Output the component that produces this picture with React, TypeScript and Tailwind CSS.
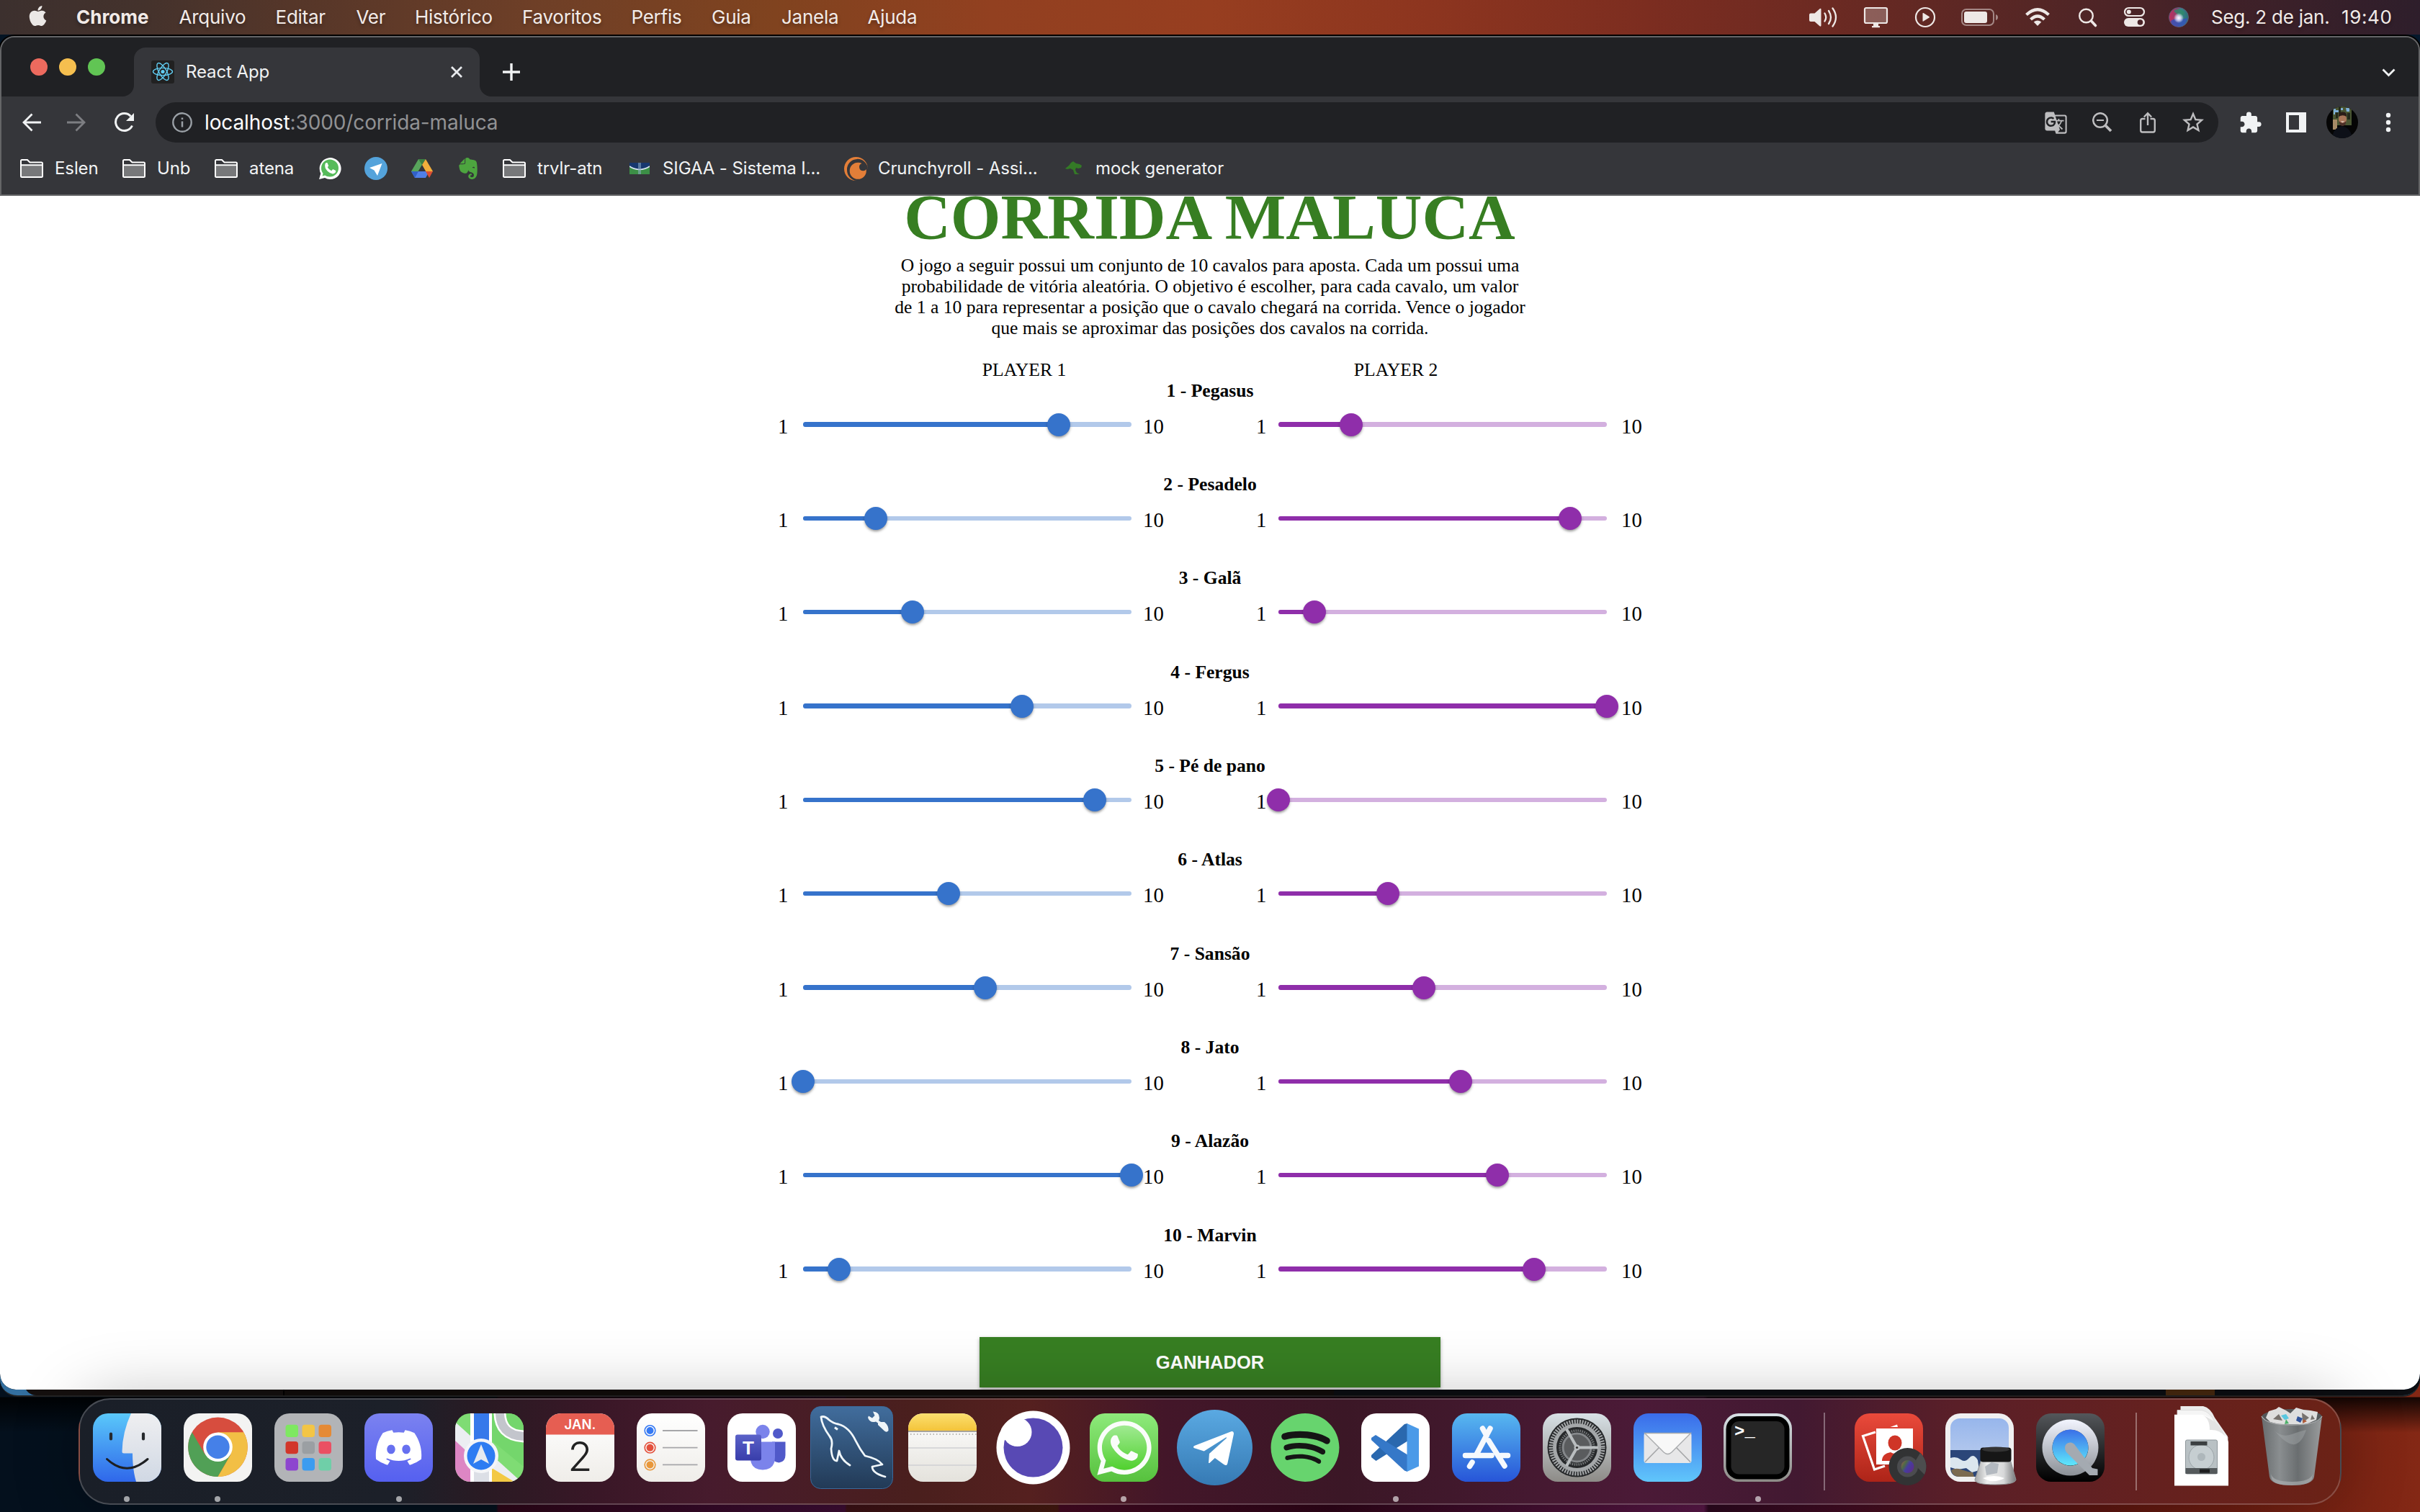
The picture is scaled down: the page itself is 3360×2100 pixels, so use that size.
import React from "react";
import { FaApple, FaDiscord, FaWhatsapp, FaTelegramPlane, FaSpotify, FaEvernote } from "react-icons/fa";
import { MdExtension, MdStarOutline, MdGTranslate } from "react-icons/md";
import { SiCrunchyroll } from "react-icons/si";

const MENU = [
  { label: "Chrome", box: "w-[142.5px] font-bold tracking-[0px]" },
  { label: "Arquivo", box: "w-[134px] tracking-[-0.25px]" },
  { label: "Editar", box: "w-[112px] tracking-[-0.25px]" },
  { label: "Ver", box: "w-[81.500px] tracking-[-0.25px]" },
  { label: "Histórico", box: "w-[149px] tracking-[-0.25px]" },
  { label: "Favoritos", box: "w-[151.5px] tracking-[-0.25px]" },
  { label: "Perfis", box: "w-[111.5px] tracking-[-0.25px]" },
  { label: "Guia", box: "w-[97px] tracking-[-0.25px]" },
  { label: "Janela", box: "w-[119.5px] tracking-[-0.25px]" },
  { label: "Ajuda", box: "w-[80px] tracking-[-0.25px]" },
];

const HORSES = [
  { name: "Pegasus", p1: 8, p2: 3 },
  { name: "Pesadelo", p1: 3, p2: 9 },
  { name: "Galã", p1: 4, p2: 2 },
  { name: "Fergus", p1: 7, p2: 10 },
  { name: "Pé de pano", p1: 9, p2: 1 },
  { name: "Atlas", p1: 5, p2: 4 },
  { name: "Sansão", p1: 6, p2: 5 },
  { name: "Jato", p1: 1, p2: 6 },
  { name: "Alazão", p1: 10, p2: 7 },
  { name: "Marvin", p1: 2, p2: 8 },
];

/* ---------- macOS menu bar ---------- */

function Status({ w, gap, h = 30, children }: { w: number; gap: number; h?: number; children: React.ReactNode }) {
  return (
    <svg width={w} height={h} viewBox={`0 0 ${w} ${h}`} fill="#eee8e6" className="shrink-0 overflow-visible" style={{ marginRight: gap }}>
      {children}
    </svg>
  );
}

function MenuBar() {
  return (
    <div className="flex h-12 shrink-0 items-center bg-[linear-gradient(90deg,#3c302e_0%,#44322c_6%,#553629_12%,#6e3f27_22%,#80431f_32%,#924020_41%,#973e20_50%,#8d351f_59%,#7c2d20_68%,#6d2a22_75%,#552625_84%,#402128_92%,#2e1e2b_100%)] font-['Inter',sans-serif] text-[26px] text-[#f2ebe8] [text-shadow:0_3px_5px_rgba(0,0,0,0.3)]">
      <FaApple className="ml-[38px] mr-[39px] -mt-1 h-[32px] w-[29px] shrink-0 text-[#ebe8e6]" />
      {MENU.map((m) => (
        <span key={m.label} className={"shrink-0 whitespace-nowrap -mt-[2px] " + m.box}>{m.label}</span>
      ))}
      <div className="ml-auto flex items-center pr-[37px]">
        <Status w={39} gap={37}>
          <path d="M2 9.500h5.500L14.500 3.200q2-1.300 2 1v22q0 2.300-2 1L7.500 21H2q-2 0-2-2v-7.500q0-2 2-2z" />
          <path d="M21.500 9.500q3.500 5.500 0 11M27 6q6 9 0 18M32.500 2.500q9 12.500 0 25" fill="none" stroke="#eee8e6" strokeWidth="2.300" strokeLinecap="round" />
        </Status>
        <Status w={33} gap={38}>
          <rect x="1" y="2" width="31" height="21" rx="2" fill="#eee8e6" fillOpacity=".28" stroke="#eee8e6" strokeWidth="2.200" />
          <path d="M13 23.500h7v3.500h2v2.200H11V27h2z" />
        </Status>
        <Status w={28} gap={36}>
          <circle cx="14" cy="15" r="13" fill="none" stroke="#eee8e6" strokeWidth="2.200" />
          <path d="M10.500 9.800q0-1.200 1-.7l8 4.900q1 .8 0 1.600l-8 5q-1 .5-1-.7z" />
        </Status>
        <Status w={51} gap={38}>
          <rect x="1" y="4" width="44" height="22" rx="6" fill="none" stroke="#eee8e6" strokeOpacity=".5" strokeWidth="2" />
          <rect x="4" y="7" width="32" height="16" rx="3" />
          <path d="M48 11q3 1 3 4t-3 4z" fillOpacity=".5" />
        </Status>
        <Status w={34} gap={40}>
          <path d="M1.500 11.500q15.500-14.500 31 0M7.500 18q9.500-9 19 0" fill="none" stroke="#eee8e6" strokeWidth="4.200" />
          <path d="M17 27l-5.300-5.500q5.300-4 10.600 0z" />
        </Status>
        <Status w={25} gap={38}>
          <circle cx="10.500" cy="13" r="9.300" fill="none" stroke="#eee8e6" strokeWidth="2.400" />
          <path d="M17.500 20l6 6.500" stroke="#eee8e6" strokeWidth="3.600" strokeLinecap="round" />
        </Status>
        <Status w={29} gap={33}>
          <rect x="1" y="2" width="27" height="11" rx="5.500" fill="none" stroke="#eee8e6" strokeWidth="2.200" />
          <circle cx="6.800" cy="7.500" r="3" />
          <rect x="0" y="16" width="29" height="12" rx="6" />
          <circle cx="22.500" cy="22" r="3.800" fill="#4a2327" />
        </Status>
        <svg width="28" height="28" viewBox="0 0 28 28" className="mr-[31px] shrink-0">
          <defs>
            <radialGradient id="siriGlow"><stop offset="0" stopColor="#fff" /><stop offset=".45" stopColor="#e9e3ff" stopOpacity=".8" /><stop offset="1" stopColor="#fff" stopOpacity="0" /></radialGradient>
            <linearGradient id="siriBase" x1="0" x2="1"><stop offset="0" stopColor="#c22d5c" /><stop offset=".45" stopColor="#8a4470" /><stop offset=".6" stopColor="#38848a" /><stop offset="1" stopColor="#2b6f74" /></linearGradient>
          </defs>
          <circle cx="14" cy="14" r="13.500" fill="url(#siriBase)" stroke="#5b5a78" />
          <path d="M3 19Q10 15 15 16T26 15Q24 27 14 27T3 19" fill="#3554b8" fillOpacity=".85" />
          <path d="M7 5Q14 0 20 5T15 13z" fill="#2f8a6a" fillOpacity=".8" />
          <circle cx="14" cy="15" r="7" fill="url(#siriGlow)" />
        </svg>
        <span className="-mt-[2px] w-[181px] whitespace-nowrap tracking-[-0.25px]">Seg. 2 de jan.</span>
        <span className="-mt-[2px] w-[72px] whitespace-nowrap tracking-[0.6px]">19:40</span>
      </div>
    </div>
  );
}

/* ---------- Browser chrome ---------- */

function ReactFavicon() {
  return (
    <svg width="32" height="32" viewBox="0 0 32 32" fill="none" stroke="#61cdf2" strokeWidth="1.400" className="shrink-0">
      <rect width="32" height="32" rx="3" fill="#212121" stroke="none" />
      <circle cx="16" cy="15.500" r="2.600" fill="#61cdf2" stroke="none" />
      <ellipse cx="16" cy="15.500" rx="13.500" ry="5.100" />
      <ellipse cx="16" cy="15.500" rx="13.500" ry="5.100" transform="rotate(60 16 15.500)" />
      <ellipse cx="16" cy="15.500" rx="13.500" ry="5.100" transform="rotate(120 16 15.500)" />
    </svg>
  );
}

function TabStrip() {
  return (
    <div className="flex h-[82px] shrink-0 items-end bg-[#202124]">
      <div className="flex h-[82px] w-[168px] shrink-0 items-center gap-4 pl-10">
        <span className="size-6 rounded-full bg-[#ed6a5e]" />
        <span className="size-6 rounded-full bg-[#f5bf4f]" />
        <span className="size-6 rounded-full bg-[#61c554]" />
      </div>
      <svg width="16" height="16" className="shrink-0"><path d="M0 16A16 16 0 0 0 16 0V16z" fill="#35363a" /></svg>
      <div className="flex h-[68px] w-[480px] shrink-0 items-center rounded-t-[16px] bg-[#35363a] pl-6 pr-[23px]">
        <ReactFavicon />
        <span className="ml-4 font-['Inter',sans-serif] text-[24px] tracking-[-0.1px] text-[#f1f3f4]">React App</span>
        <svg width="18" height="18" viewBox="0 0 18 18" className="ml-auto"><path d="M2 2l14 14M16 2L2 16" stroke="#e8eaed" strokeWidth="2.800" /></svg>
      </div>
      <svg width="16" height="16" className="shrink-0"><path d="M16 16A16 16 0 0 1 0 0V16z" fill="#35363a" /></svg>
      <svg width="24" height="24" className="mb-[22px] ml-4"><path d="M12 0v24M0 12h24" stroke="#f1f3f4" strokeWidth="3.400" /></svg>
      <svg width="19" height="12" viewBox="0 0 19 12" className="mb-[27px] ml-auto mr-[32px]"><path d="M1.500 1.500l8 8 8-8" fill="none" stroke="#f1f3f4" strokeWidth="2.800" /></svg>
    </div>
  );
}

function Toolbar() {
  return (
    <div className="flex h-[72px] shrink-0 items-center bg-[#35363a] pl-[28px] text-[#f1f3f4]">
      <svg width="27" height="26" viewBox="0 0 27 26" className="mr-9"><path d="M27 13H3M14.500 1.500L3 13l11.500 11.500" fill="none" stroke="#f1f3f4" strokeWidth="2.800" /></svg>
      <svg width="27" height="26" viewBox="0 0 27 26" className="mr-[39px]"><path d="M0 13h24M12.500 1.500L24 13 12.500 24.500" fill="none" stroke="#7d7e82" strokeWidth="2.800" /></svg>
      <svg width="28" height="28" viewBox="0 0 28 28" className="mr-[29px]"><path d="M24.500 18.500A12 12 0 1 1 22.500 5.500" fill="none" stroke="#f1f3f4" strokeWidth="3" /><path d="M27 1v11H16z" fill="#f1f3f4" /></svg>
      <div className="flex h-14 w-[2864px] shrink-0 items-center rounded-full bg-[#202124] pl-[23px] pr-[17px] text-[#bdc1c6]">
        <svg width="28" height="28" viewBox="0 0 28 28"><circle cx="14" cy="14" r="12.700" fill="none" stroke="#9aa0a6" strokeWidth="2.400" /><path d="M14 12.500v8M14 7.500v2.600" stroke="#9aa0a6" strokeWidth="2.500" /></svg>
        <span className="ml-[17px] font-['Inter',sans-serif] text-[28px] tracking-[-0.12px] text-[#919294]"><span className="text-white">localhost</span>:3000/corrida-maluca</span>
        <MdGTranslate className="ml-auto mr-[34px] size-[33px] text-[#bdbdbf]" />
        <svg width="28" height="28" viewBox="0 0 28 28" className="mr-[38px]" fill="none" stroke="#bdbdbf"><circle cx="11" cy="11" r="9.800" strokeWidth="2.500" /><path d="M6 11h10" strokeWidth="2" /><path d="M17.500 17.500l8.500 8.500" strokeWidth="3.800" /></svg>
        <svg width="22" height="30" viewBox="0 0 22 30" className="mr-[34px]" fill="none" stroke="#bdbdbf" strokeWidth="2.400"><path d="M7.500 10H3.500Q1.200 10 1.200 12.500V26Q1.200 28.500 3.500 28.500H18.500Q20.800 28.500 20.800 26V12.500Q20.800 10 18.500 10H14.500M11 19V2.500M5.800 7.500L11 2.200l5.200 5.300" /></svg>
        <MdStarOutline className="size-[36px] text-[#bdbdbf]" />
      </div>
      <MdExtension className="ml-[28px] size-[33px]" />
      <svg width="28" height="28" viewBox="0 0 28 28" className="ml-[33px]"><path fillRule="evenodd" d="M0 0h28v28H0zM4 4v20h14V4z" fill="#f1f3f4" /></svg>
      <svg width="44" height="44" viewBox="0 0 44 44" className="ml-[28px]">
        <clipPath id="avatar"><circle cx="22" cy="22" r="22" /></clipPath>
        <g clipPath="url(#avatar)">
          <path d="M0 0h44v44H0z" fill="#050505" />
          <path d="M9 0h26v26H9z" fill="#4a5633" />
          <path d="M10 3h3v2h4v3h-5v3h-2zM27 2h5v5h-4zM20 2h3v3h-3z" fill="#7fb0d8" />
          <path d="M17 0h3v10h-3zM29 9h4v9h-4zM13 8h3v8h-3z" fill="#23291b" />
          <path d="M9 18h6v14H9z" fill="#a58a66" />
          <path d="M8 44q1-14 13-17 13 2 15 17z" fill="#0d1018" />
          <ellipse cx="22.500" cy="17.500" rx="5.500" ry="8.500" fill="#a97558" />
          <path d="M17 14q-1-6 5.500-6.500T28 14q-5-3.500-11 0z" fill="#2a1d18" />
          <path d="M17.500 20q5 6 10 0l-1 5q-4 4-8 0z" fill="#4c3028" />
          <path d="M20 20.500h5q-2.500 2.500-5 0z" fill="#f5ece6" />
        </g>
      </svg>
      <svg width="6" height="26" viewBox="0 0 6 26" className="ml-[39px] overflow-visible" fill="#f1f3f4"><circle cx="3" cy="3" r="3.200" /><circle cx="3" cy="13" r="3.200" /><circle cx="3" cy="23" r="3.200" /></svg>
    </div>
  );
}

function Folder() {
  return (
    <svg width="32" height="26" viewBox="0 0 32 26" className="shrink-0">
      <path d="M1 2.500Q1 1 2.500 1H10l3.500 3.500h16Q31 4.500 31 6v17.500Q31 25 29.500 25h-27Q1 25 1 23.500z" fill="#35363a" stroke="#fff" strokeWidth="2" />
      <path d="M2 9h28v15H2z" fill="#77787a" />
      <path d="M1 8.200h30" stroke="#fff" strokeWidth="2" />
    </svg>
  );
}

function Mark({ w, text, gap = "gap-[16px]", children }: { w: string; text?: string; gap?: string; children: React.ReactNode }) {
  return (
    <div className={"flex shrink-0 items-center " + w + " " + gap}>
      {children}
      {text && <span className="whitespace-nowrap">{text}</span>}
    </div>
  );
}

function Bookmarks() {
  return (
    <div className="flex h-[64px] shrink-0 items-start bg-[#35363a] pl-[26px] font-['Inter',sans-serif] text-[24px] tracking-[-0.1px] text-[#f1f3f4]">
      <div className="flex h-[56px] items-center">
        <Mark w="w-[142px]" text="Eslen"><Folder /></Mark>
        <Mark w="w-[128px]" text="Unb"><Folder /></Mark>
        <Mark w="w-[144px]" text="atena"><Folder /></Mark>
        <Mark w="w-[64px]">
          <svg width="32" height="32" viewBox="0 0 32 32">
            <path d="M1 31l2.300-8A15 15 0 1 1 9 29z" fill="#fff" />
            <circle cx="16" cy="15.500" r="12" fill="#57bb5b" />
            <path d="M5.500 26.500l1.800-5.500 4 4z" fill="#57bb5b" />
            <path d="M9.500 9.500q1.500-2 3-1.200l1.700 4-1.400 2q2 3.800 5.400 5l2-2.200 4 2q.6 3-3.200 4.200-4 .6-8.200-3.500-4.800-4.600-3.300-10.300z" fill="#fff" />
          </svg>
        </Mark>
        <Mark w="w-[65px]">
          <svg width="32" height="32" viewBox="0 0 32 32"><circle cx="16" cy="16" r="16" fill="#54a3db" /><path d="M7 15L24.500 9 18 26l-4.500-7.500z" fill="#fff" /></svg>
        </Mark>
        <Mark w="w-[64px]">
          <svg width="30" height="26" viewBox="0 0 30 26">
            <path d="M10 0h5L15 8 5 25 0 17z" fill="#58a55c" /><path d="M10 0h10L15 8z" fill="#3c7f42" />
            <path d="M20 0L30 17H20L15 8z" fill="#f1ae3c" />
            <path d="M0 17H25L20 26H5z" fill="#4f7fe8" /><path d="M0 17H10L5 26z" fill="#3160c8" /><path d="M20 17H30L25 26z" fill="#da4f33" />
            <path d="M15 8.500L20 17H10z" fill="#35363a" />
          </svg>
        </Mark>
        <Mark w="w-[63px]"><FaEvernote className="-ml-0.5 size-[34px] text-[#4da53f]" /></Mark>
        <Mark w="w-[176px]" text="trvlr-atn"><Folder /></Mark>
        <Mark w="w-[298px]" text="SIGAA - Sistema I..." gap="gap-[18px]">
          <svg width="28" height="16" viewBox="0 0 28 16" className="shrink-0"><path d="M0 0h28v16H0z" fill="#3c8f46" /><path d="M0 0h28v5Q21 9.500 14 9.500T0 5z" fill="#17386f" /><path d="M0 5Q7 9.500 14 9.500T28 5" fill="none" stroke="#d9e6f2" strokeWidth="1.500" /><path d="M12 0h4v16h-4z" fill="#8fb0c8" fillOpacity=".55" /></svg>
        </Mark>
        <Mark w="w-[303px]" text="Crunchyroll - Assi..." gap="gap-[14px]"><SiCrunchyroll className="size-[33px] shrink-0 text-[#e37e38]" /></Mark>
        <Mark w="w-[230px]" text="mock generator" gap="gap-[18px]">
          <svg width="28" height="20" viewBox="0 0 28 20" className="shrink-0" fill="#347a26"><path d="M0 9L4 10 9 6 12 2 15 0 19 3 24 4 27 6 26 9 22 10 19 9 18 12 20 16 24 18 17 18 15 12 11 10 7 11z" /></svg>
        </Mark>
      </div>
    </div>
  );
}

/* ---------- Game page ---------- */

function Slider({ value, tone }: { value: number; tone: "blue" | "purple" }) {
  const at = `${((value - 1) / 9) * 100}%`;
  const rail = tone === "blue" ? "bg-[#b2c9ea]" : "bg-[#d3b0df]";
  const fill = tone === "blue" ? "bg-[#3673cb]" : "bg-[#8f2eaa]";
  return (
    <div className="flex h-12 w-[456.500px] shrink-0 items-center">
      <div className={"relative h-[6.400px] w-full rounded-full " + rail}>
        <div className={"h-full rounded-full " + fill} style={{ width: at }} />
        <span className={"absolute -top-[12.800px] size-8 -translate-x-1/2 rounded-full shadow-[0_3px_3px_-1px_rgba(0,0,0,0.25),0_2px_4px_rgba(0,0,0,0.2)] " + fill} style={{ left: at }} />
      </div>
    </div>
  );
}

function HorseRow({ index, horse }: { index: number; horse: (typeof HORSES)[number] }) {
  return (
    <div className="h-[130.350px]">
      <div className="h-[29px] text-center font-bold leading-[29px]">{index} - {horse.name}</div>
      <div className="mt-[9px] flex items-center text-[28.800px] leading-[32px]">
        <span className="mt-[4px] w-[34.500px]">1</span>
        <Slider value={horse.p1} tone="blue" />
        <span className="ml-[16px] mt-[4px] w-[157px]">10</span>
        <span className="mt-[4px] w-[30.500px]">1</span>
        <Slider value={horse.p2} tone="purple" />
        <span className="ml-[20px] mt-[4px]">10</span>
      </div>
    </div>
  );
}

function GamePage() {
  return (
    <div className="flex min-h-0 flex-1 flex-col items-center overflow-hidden rounded-b-[22px] bg-white font-['Liberation_Serif',serif] text-[25.600px] text-black">
      <h1 className="-mt-[23px] shrink-0 pr-[1px] text-[89.600px] font-bold leading-[103px] text-[#377e22]">CORRIDA MALUCA</h1>
      <p className="mt-[1.500px] w-[896px] shrink-0 text-center leading-[29px]">
        O jogo a seguir possui um conjunto de 10 cavalos para aposta. Cada um possui uma<br />
        probabilidade de vitória aleatória. O objetivo é escolher, para cada cavalo, um valor<br />
        de 1 a 10 para representar a posição que o cavalo chegará na corrida. Vence o jogador<br />
        que mais se aproximar das posições dos cavalos na corrida.
      </p>
      <div className="mt-[29px] flex w-[1032px] shrink-0 justify-around leading-[29px]">
        <span>PLAYER 1</span>
        <span>PLAYER 2</span>
      </div>
      <div className="w-[1200px] shrink-0">
        {HORSES.map((h, i) => <HorseRow key={h.name} index={i + 1} horse={h} />)}
      </div>
      <button className="mt-[26px] h-[70px] w-[640px] shrink-0 bg-[#377e22] font-['Liberation_Sans',sans-serif] text-[25.600px] font-bold text-white shadow-[0_2px_5px_rgba(0,0,0,0.35)]">GANHADOR</button>
    </div>
  );
}

/* ---------- Dock ---------- */

function Tile({ dot, children }: { dot?: boolean; children: React.ReactNode }) {
  return (
    <div className="flex w-[125.800px] shrink-0 flex-col items-center">
      <svg width="95" height="95" viewBox="0 0 95 95" className="mt-[19px] overflow-visible">{children}</svg>
      {dot && <span className="mt-[20px] size-2 rounded-full bg-white/60" />}
    </div>
  );
}

const Base = ({ fill }: { fill: string }) => <rect width="95" height="95" rx="21" fill={fill} />;

function Gradient({ id, from, to }: { id: string; from: string; to: string }) {
  return (
    <linearGradient id={id} x1="0" y1="0" x2="0" y2="1">
      <stop offset="0" stopColor={from} />
      <stop offset="1" stopColor={to} />
    </linearGradient>
  );
}

const LAUNCH = ["#7ee861", "#f3c545", "#e58a35", "#d2362a", "#9b9fa3", "#ea5063", "#8d46cf", "#3b9cf0", "#6fcfa8"];

function Divider() {
  return <div className="mt-[18px] h-[108px] w-[56px] shrink-0 pl-[28px]"><div className="h-full w-[2px] bg-white/35" /></div>;
}

function Dock() {
  return (
    <div className="ml-[109px] mt-[2px] flex h-[148px] w-[3142px] items-start rounded-[44px] border-2 border-white/20 bg-[linear-gradient(90deg,#1a1f28_0%,#1c2029_14%,#2a1a23_18%,#3a1727_23%,#471b2d_28%,#4a1f1d_37%,#55201f_42%,#431629_48%,#3b1726_56%,#4b1a37_69%,#421931_76%,#5a1f28_83%,#65211f_92%,#6b2216_100%)] pl-[2.600px] shadow-[0_0_90px_rgba(0,0,0,0.26)]">
      <svg width="0" height="0" className="absolute">
        <defs>
          <clipPath id="tile"><rect width="95" height="95" rx="21" /></clipPath>
          <Gradient id="finder" from="#5ac8fa" to="#2f67ea" />
          <Gradient id="light" from="#efeff1" to="#d0d8e4" />
          <Gradient id="discord" from="#7b82f0" to="#5560f0" />
          <Gradient id="mysql" from="#416d9d" to="#223a56" />
          <Gradient id="wa" from="#8eea7b" to="#56c13d" />
          <Gradient id="waCenter" from="#a5ec98" to="#50d02e" />
          <Gradient id="tg" from="#5aa9e2" to="#367ab4" />
          <Gradient id="paper" from="#ffffff" to="#efede9" />
          <Gradient id="notePaper" from="#ffffff" to="#e4e2dc" />
          <Gradient id="notes" from="#fbdf70" to="#f4c43a" />
          <Gradient id="teams" from="#5b62c8" to="#383daa" />
          <Gradient id="appstore" from="#57b8f0" to="#2755d8" />
          <Gradient id="prefs" from="#d8e1e6" to="#8d8b87" />
          <Gradient id="mail" from="#3a6cea" to="#60c6fb" />
          <Gradient id="booth" from="#ea4a3b" to="#ad2418" />
          <Gradient id="qt" from="#54575b" to="#000000" />
          <Gradient id="qtRing" from="#f3f5ff" to="#8b9096" />
          <Gradient id="qtBlue" from="#3a6fe8" to="#5fe8fb" />
          <Gradient id="sky" from="#97b6ec" to="#c4d3ee" />
          <linearGradient id="can" x1="0" x2="1"><stop offset="0" stopColor="#686c6e" /><stop offset=".3" stopColor="#8a8e90" /><stop offset=".6" stopColor="#6a6e70" /><stop offset="1" stopColor="#9a9c9d" /></linearGradient>
          <linearGradient id="jar" x1="0" x2="1"><stop offset="0" stopColor="#a4a6a8" /><stop offset=".3" stopColor="#eceded" /><stop offset=".7" stopColor="#d8d9da" /><stop offset="1" stopColor="#77797b" /></linearGradient>
          <linearGradient id="lens" x1="0" y1="0" x2="1" y2=".6"><stop offset="0" stopColor="#a05a52" /><stop offset=".35" stopColor="#4d6a45" /><stop offset=".6" stopColor="#473ba0" /><stop offset="1" stopColor="#5a2f8a" /></linearGradient>
        </defs>
      </svg>

      {/* Finder */}
      <Tile dot>
        <g clipPath="url(#tile)">
          <path d="M0 0h95v95H0z" fill="url(#finder)" />
          <path d="M53 0q-12 26-12.500 53q0 2.500 2.500 2.500H55Q55 78 60 95H95V0z" fill="url(#light)" />
        </g>
        <path d="M25 28.500v7M70 28.500v7" stroke="#26292d" strokeWidth="4.200" strokeLinecap="round" />
        <path d="M19.500 63.500Q47 89 76 63.500" fill="none" stroke="#1d1f22" strokeWidth="3" strokeLinecap="round" />
      </Tile>

      {/* Chrome */}
      <Tile dot>
        <Base fill="#f3f3f2" />
        <g transform="translate(47.500 46.800)">
          <circle r="41.300" fill="#d74d3e" />
          <path d="M-17.900 10.300L-35.800-20.650A41.300 41.300 0 0 0 0 41.300L17.900 10.300z" fill="#51a056" />
          <path d="M17.900 10.300L0 41.300A41.300 41.300 0 0 0 35.800-20.650H0z" fill="#f2bf45" />
          <circle r="20.300" fill="#fff" />
          <circle r="16.200" fill="#4580e8" />
        </g>
      </Tile>

      {/* Launchpad */}
      <Tile>
        <Base fill="#b2b4b7" />
        {LAUNCH.map((c, i) => <rect key={c} x={15.500 + (i % 3) * 23} y={15.700 + Math.floor(i / 3) * 23.200} width="17.500" height="17.300" rx="4" fill={c} />)}
      </Tile>

      {/* Discord */}
      <Tile dot>
        <Base fill="url(#discord)" />
        <FaDiscord x="13" y="13" size="69" color="#fff" />
      </Tile>

      {/* Maps */}
      <Tile>
        <g clipPath="url(#tile)">
          <path d="M0 0h95v95H0z" fill="#7fdc74" />
          <path d="M0 12L95 98v22H60L0 40z" fill="#eceef2" />
          <path d="M51 38L95 74V0H51z" fill="#74d66c" />
          <path d="M0 38q12 10 22 22v35H0z" fill="#dd86c4" />
          <path d="M51 76l31 19H51z" fill="#f3c944" />
          <path d="M62-6q-2 38 36 38" fill="none" stroke="#fff" strokeWidth="17" />
          <path d="M62-6q-2 38 36 38" fill="none" stroke="#c3c5cc" strokeWidth="12" />
          <path d="M21-2h30v98H21z" fill="#fff" />
          <path d="M26-2h21v50H26z" fill="#3679ea" />
          <path d="M26 60h21v36H26z" fill="#dcdfe6" />
        </g>
        <circle cx="36" cy="59" r="24" fill="#f4f5f8" />
        <circle cx="36" cy="59" r="19.500" fill="#2e7cf2" />
        <path d="M36 43L47 70 36 64 25 70z" fill="#e6eaf0" />
      </Tile>

      {/* Calendar */}
      <Tile>
        <g clipPath="url(#tile)">
          <path d="M0 0h95v95H0z" fill="url(#paper)" />
          <path d="M0 0h95v29.500H0z" fill="#e65e52" />
        </g>
        <text x="47.500" y="22" textAnchor="middle" className="font-['Inter',sans-serif] text-[18.500px] font-semibold" fill="#fff">JAN.</text>
        <text x="47.500" y="79.500" textAnchor="middle" className="font-['Inter',sans-serif] text-[56px] font-light" fill="#222">2</text>
      </Tile>

      {/* Reminders */}
      <Tile>
        <Base fill="url(#paper)" />
        {["#3579f4", "#e4503c", "#e8973a"].map((c, i) => (
          <g key={c} transform={`translate(18.500 ${24 + i * 23.700})`}>
            <circle r="7.300" fill="none" stroke={c} strokeWidth="1.600" />
            <circle r="5" fill={c} />
            <path d="M17.500 0H66" stroke="#a6a6a9" strokeWidth="1.800" />
          </g>
        ))}
      </Tile>

      {/* Teams */}
      <Tile>
        <Base fill="#fff" />
        <circle cx="70" cy="28" r="7" fill="#5059c9" />
        <path d="M62 39.500h18.500V58q0 9.500-9 10.500-9-1-9.500-9z" fill="#5059c9" />
        <circle cx="49" cy="25.500" r="9.700" fill="#7b83eb" />
        <path d="M33 39.500H66V61Q66 78 49 78.500 32 78 32 62z" fill="#7b83eb" />
        <rect x="11" y="29.500" width="36" height="36" rx="3" fill="url(#teams)" />
        <text x="29" y="56.500" textAnchor="middle" className="font-['Liberation_Sans',sans-serif] text-[26px] font-bold" fill="#fff">T</text>
      </Tile>

      {/* MySQL Workbench */}
      <Tile>
        <rect x="-9.500" y="-9.500" width="114" height="114" rx="14" fill="url(#mysql)" stroke="#3a6a9c" strokeWidth="1" />
        <path d="M5 5Q10 3 16 9 22 14 29 15 44 19 53 38 59 50 66 59 84 63 90 71L76 74Q76 83 94 88M5 5Q6 17 17 32 22 38 19 49 20 66 27 66L30 52Q32 64 45 72" fill="none" stroke="#f1f8fc" strokeWidth="2.800" strokeLinejoin="round" strokeLinecap="round" />
        <path d="M24 19.500l4 3" stroke="#f1f8fc" strokeWidth="3" />
        <path d="M77-2.500Q86-2 86 6 86 8 85 10L88 12 93 12Q99 17 98.500 24 96 27 93 24.500L84 16 84 13.500 81 11.500Q73 14 70 6L71 3.500 76 6.500 79.500 3z" fill="#eef4f8" />
      </Tile>

      {/* Notes */}
      <Tile>
        <g clipPath="url(#tile)">
          <path d="M0 0h95v95H0z" fill="url(#notePaper)" />
          <path d="M0 0h95v24H0z" fill="url(#notes)" />
          <path d="M0 25h95" stroke="#a7a39a" strokeWidth="2" />
          <path d="M3 29h92" stroke="#b9b7b2" strokeWidth="2" strokeDasharray="1.500 3" />
          <path d="M0 48h95M0 72h95" stroke="#cfcfd3" strokeWidth="1.600" />
        </g>
      </Tile>

      {/* Insomnia */}
      <Tile>
        <circle cx="47.500" cy="47.500" r="51" fill="#fff" />
        <circle cx="47.500" cy="47.500" r="41" fill="#5849b4" />
        <circle cx="25.500" cy="26" r="20" fill="#fff" />
        <path d="M3 22Q14 2 36 5L26 30 6 38z" fill="#fff" />
      </Tile>

      {/* WhatsApp */}
      <Tile dot>
        <Base fill="url(#wa)" />
        <circle cx="49" cy="46" r="33" fill="url(#waCenter)" />
        <FaWhatsapp x="5" y="5" size="86" color="#fafdfa" />
      </Tile>

      {/* Telegram */}
      <Tile>
        <circle cx="47.500" cy="47.500" r="52.500" fill="url(#tg)" />
        <FaTelegramPlane x="14" y="17" size="64" color="#fff" />
      </Tile>

      {/* Spotify */}
      <Tile>
        <circle cx="48" cy="47.500" r="44" fill="#151515" />
        <FaSpotify x="-1" y="-1.500" size="98" color="#67d46e" />
      </Tile>

      {/* Visual Studio Code */}
      <Tile dot>
        <Base fill="#fff" />
        <path d="M60 15L64 14 65 38 20.500 66 14 61V58z" fill="#2a68ae" />
        <path d="M14 34L20 30 65 58 64 81 60 79.500 14 37z" fill="#3578c8" />
        <path d="M63.500 14L80 21.500V73.500L63.500 81z" fill="#4b9ae8" />
      </Tile>

      {/* App Store */}
      <Tile>
        <Base fill="url(#appstore)" />
        <g stroke="#f6f9fd" strokeWidth="7.500" strokeLinecap="round">
          <path d="M53 21L34 57M42.500 21L48 31M51 38L73 73M18.500 58.500H55M68 58.500H77.500M28 68L24.500 73.500" />
        </g>
      </Tile>

      {/* System Settings */}
      <Tile>
        <Base fill="url(#prefs)" />
        <circle cx="47.500" cy="47.500" r="41" fill="#26282a" />
        <circle cx="47.500" cy="47.500" r="36" fill="none" stroke="#a4a7a9" strokeWidth="6" strokeDasharray="2 1.600" />
        <circle cx="47.500" cy="47.500" r="31" fill="none" stroke="#a4a7a9" strokeWidth="5" />
        <circle cx="47.500" cy="47.500" r="23.500" fill="none" stroke="#747779" strokeWidth="3.500" strokeDasharray="1.600 1.400" />
        <circle cx="47.500" cy="47.500" r="19.500" fill="#5a5c5e" stroke="#84878a" strokeWidth="3" />
        <path d="M47.500 47.500H77M47.500 47.500L33 22M47.500 47.500L33 73" stroke="#b9bdbf" strokeWidth="4" />
        <circle cx="47.500" cy="47.500" r="4" fill="#b9bdbf" />
        <circle cx="47.500" cy="47.500" r="1.600" fill="#333" />
      </Tile>

      {/* Mail */}
      <Tile>
        <Base fill="url(#mail)" />
        <rect x="14.500" y="27" width="66" height="42" rx="3.500" fill="#e7e7e8" />
        <path d="M16 67.500L36 47M79 67.500L59 47" stroke="#a5a6a8" strokeWidth="1.600" />
        <path d="M15.500 27.500L42 54q5.500 5 11 0L79.500 27.500z" fill="#f8f8f8" stroke="#a9abad" strokeWidth="1.400" />
      </Tile>

      {/* Terminal */}
      <Tile dot>
        <Base fill="url(#prefs)" />
        <rect x="3.500" y="4" width="88" height="87.500" rx="18" fill="#000" />
        <rect x="10.500" y="11" width="74" height="73.500" rx="11" fill="#262626" />
        <text x="15" y="31.500" className="font-['Liberation_Mono',monospace] text-[24px] font-bold" fill="#fff">&gt;_</text>
      </Tile>

      <Divider />

      {/* Photo Booth */}
      <Tile>
        <Base fill="url(#booth)" />
        <path d="M29 26L11.500 31.500 27.500 78 42 73" fill="none" stroke="#fff" strokeWidth="3.200" />
        <path d="M49.500 19L59 15.500 60 19z" fill="#fff" />
        <path d="M30 21H81V71H30z" fill="#fff" />
        <ellipse cx="56" cy="41" rx="9.500" ry="10.500" fill="#cf3527" />
        <path d="M38 66q0-10 12-12 6 4 12 0 12 2 12 12z" fill="#cf3527" />
        <circle cx="73.500" cy="74" r="26" fill="#323334" />
        <path d="M91 55A26 26 0 0 1 97 85L82 70z" fill="#4c4d4e" />
        <circle cx="73.500" cy="74" r="14.500" fill="#4b4c4f" />
        <circle cx="73.500" cy="74" r="9" fill="url(#lens)" />
      </Tile>

      {/* Preview */}
      <Tile>
        <Base fill="#f0f0f1" />
        <rect x="7" y="7" width="81" height="81" rx="13" fill="url(#sky)" />
        <path d="M7 51H88V75q0 13-13 13H20Q7 88 7 75z" fill="#2b4679" />
        <path d="M7 62q8-3 14 2t12-2 12 3l2 14-10 3-8-6-12 2-10-3z" fill="#dbe6ee" />
        <path d="M8 79q6-4 14-1t16 4l2 6H20Q10 88 8 79z" fill="#7b6a50" />
        <path d="M50 64L41 92q0 7 28 7t29-7L90 64z" fill="url(#jar)" stroke="#8f9193" strokeWidth="1" />
        <path d="M55 74l9-6 10 2-2 13-15 3z" fill="#b3b9c0" /><path d="M52 90q16-6 30 0-8 5-20 4z" fill="#fff" />
        <rect x="48.500" y="47.500" width="43" height="20" rx="4" fill="#161616" />
        <ellipse cx="70" cy="50" rx="19" ry="3.500" fill="#333" />
      </Tile>

      {/* QuickTime Player */}
      <Tile>
        <Base fill="url(#qt)" />
        <path fillRule="evenodd" d="M47.500 8.500a39 39 0 1 1-.01 0zM47.500 22.700a25 25 0 1 0 .01 0z" fill="url(#qtRing)" />
        <circle cx="47.500" cy="47.500" r="25" fill="url(#qtBlue)" />
        <path d="M40 48q0-7 7-7.500 5 0 8 5L78 76l7.500 1.500V86H74L42 54q-2-3-2-6z" fill="#a4aab1" />
      </Tile>

      <Divider />

      {/* Document stack */}
      <Tile>
        <path d="M18.500-10H50q10 2 16 16l18 26v60H18.500z" fill="#ececec" />
        <path d="M14-4.500H48Q60-2 66 12L84 33v50H14z" fill="#f5f5f5" stroke="#d9d9d9" strokeWidth=".8" />
        <path d="M10 1.700H48Q60 3 66 16q14 6 19 24V100.500H10z" fill="#fff" />
        <path d="M48 2q11 4 11 21 13-1 22 9-8-20-33-30z" fill="#e3e3e3" />
        <rect x="25.500" y="37" width="44" height="47" rx="2" fill="#b9c1c4" stroke="#8e979b" strokeWidth="1" />
        <circle cx="47.500" cy="61" r="17.500" fill="#c6ced1" stroke="#9ba4a8" strokeWidth="1" />
        <circle cx="47.500" cy="60.500" r="5.500" fill="#aeb7bb" />
        <path d="M32.500 39h23v5.500h-23z" fill="#3b3f41" />
        <path d="M25.500 76h44v8h-44z" fill="#555a5c" /><path d="M45 77.500h14v5H45z" fill="#1c1e1f" />
      </Tile>

      {/* Trash */}
      <Tile>
        <path d="M6 4L17 88q2 12 31 12t31-12L90 4Q84 16 48 16T6 4z" fill="url(#can)" />
        <ellipse cx="48" cy="5" rx="42" ry="11" fill="#54585a" />
        <path d="M12 6L16-3 26-6 30-9 40-4 46 0 54-8 64-5 74-4 84-2 82 9 68 15H30L18 12z" fill="#dedede" />
        <path d="M22 8l8-7 5 9zM62-1l10 7-9 7zM76 2l4 6-6 1z" fill="#77726e" />
        <path d="M33 3l7-2 4 6-6 2z" fill="#58c7e0" /><path d="M40 8l4 6-6 1z" fill="#4fb06b" /><path d="M56 4l7 3-3 6-6-3z" fill="#31549b" /><path d="M64 8l5 3-6 3z" fill="#b25a37" />
        <path d="M6 4q6 12 42 12T90 4" fill="none" stroke="#a5a8aa" strokeWidth="1.500" />
        <path d="M24 24q10 10 24 5t20-6q-6 18-16 20T24 24z" fill="#a4a8aa" fillOpacity=".45" />
        <path d="M19 84q3 11 29 11t29-11l-1 7q-3 9-28 9t-28-9z" fill="#b0b4b6" fillOpacity=".6" />
      </Tile>
    </div>
  );
}

/* Bottom edge of the windows stacked behind the browser */
function BackWindows() {
  return (
    <div className="-mt-[22px] flex h-[32px] shrink-0 items-end overflow-hidden rounded-b-[24px] border-b-2 border-[#232323] bg-[#336f9f]">
      <div className="ml-[34px] h-full w-[361px] rounded-bl-[16px] border-r-2 border-black bg-[#15100f]" />
      <div className="h-full w-[1471px] rounded-br-[14px] bg-[#110d0b]" />
      <div className="-ml-[14px] flex h-full flex-1 items-end bg-[#0c0e12] pl-[1155px]">
        <div className="h-full w-[68px] bg-[#47290f]" />
      </div>
    </div>
  );
}

export default function App() {
  return (
    <div className="flex h-[2100px] w-[3360px] flex-col overflow-hidden bg-[linear-gradient(180deg,transparent_1940px,rgba(0,0,0,0.85)_1941px,rgba(0,0,0,0)_1990px),linear-gradient(90deg,#04101d_0%,#04111d_20.500%,#2c0618_20.600%,#3c0d33_34.900%,#3b1115_35%,#42180f_43.700%,#430a22_43.800%,#2e0518_55%,#571746_70.400%,#2b081e_70.600%,#400c22_76%,#5f170f_88%,#842815_100%)]">
      <MenuBar />
      <div className="relative z-10 flex h-[1882px] shrink-0 flex-col bg-[linear-gradient(90deg,#041424,#7c4a1a_30%,#7d2d1f_60%,#04182c)] pt-[2px] [clip-path:inset(0_0_0_0_round_0_0_22px_22px)]">
        <div className="flex min-h-0 flex-1 flex-col">
          <div className="flex h-[222px] shrink-0 flex-col overflow-hidden rounded-t-[20px] border-2 border-[#646567] bg-[#35363a] [box-shadow:0_0_0_2px_#000]">
            <TabStrip />
            <Toolbar />
            <Bookmarks />
          </div>
          <GamePage />
        </div>
      </div>
      <BackWindows />
      <div className="relative z-20"><Dock /></div>
    </div>
  );
}
